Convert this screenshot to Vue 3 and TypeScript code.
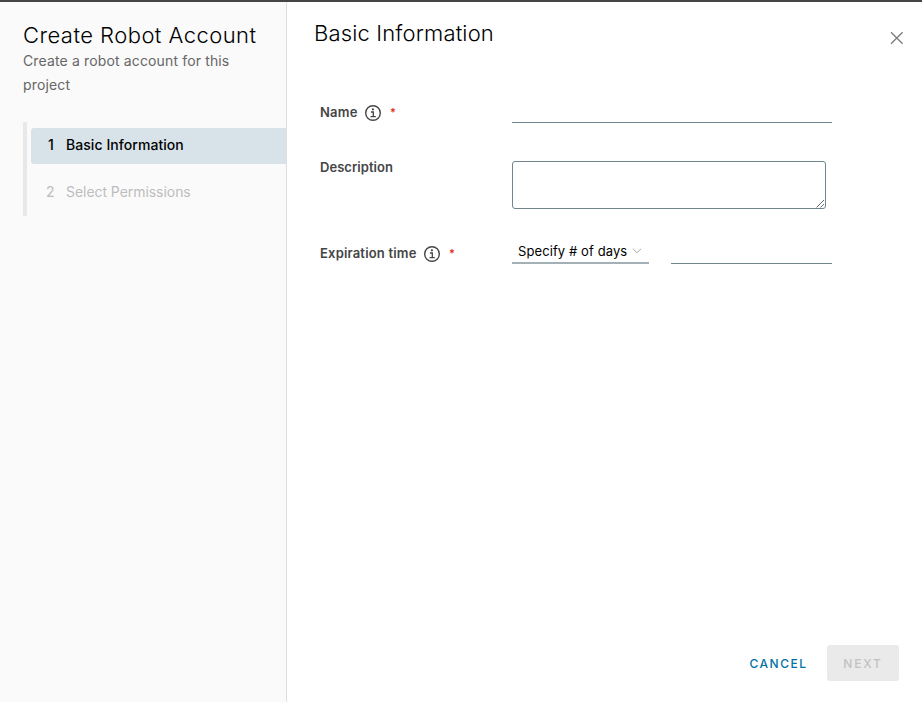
<script setup lang="ts">
import { ref } from 'vue'

interface Step {
  id: number
  title: string
}

const steps: Step[] = [
  { id: 1, title: 'Basic Information' },
  { id: 2, title: 'Select Permissions' },
]

const current = ref(1)
const name = ref('')
const description = ref('')
const days = ref('')
</script>

<template>
  <div class="wizard">
    <aside class="side">
      <h1 class="title">Create Robot Account</h1>
      <p class="subtitle">Create a robot account for this project</p>
      <ol class="steps">
        <li v-for="step in steps" :key="step.id" class="step" :class="{ active: step.id === current }">
          <span class="num">{{ step.id }}</span>
          <span class="step-title">{{ step.title }}</span>
        </li>
      </ol>
    </aside>

    <main class="main">
      <header class="head">
        <h2 class="page-title">Basic Information</h2>
        <button class="close" type="button" aria-label="Close">
          <svg width="14" height="14" viewBox="0 0 14 14">
            <path d="M1 1.2 12.6 12.8M12.6 1.2 1 12.8" fill="none" stroke="#7c7c7c" stroke-width="1.3" />
          </svg>
        </button>
      </header>

      <form class="form" @submit.prevent>
        <div class="row row-name">
          <label class="label l-name" for="name">Name</label>
          <svg class="info" width="16" height="16" viewBox="0 0 16 16">
            <circle cx="8" cy="8" r="7.3" fill="none" stroke="#454545" stroke-width="1.4" />
            <circle cx="7.9" cy="4.3" r="1.1" fill="#454545" />
            <path d="M5.9 7H8.3V11.6M5.5 11.7H10.8" fill="none" stroke="#454545" stroke-width="1.3" />
          </svg>
          <span class="required">*</span>
          <input id="name" v-model="name" class="line-input name-input" />
        </div>

        <div class="row row-desc">
          <label class="label l-desc" for="description">Description</label>
          <div class="area">
            <textarea id="description" v-model="description"></textarea>
            <svg class="grip" width="9" height="9" viewBox="0 0 9 9">
              <path d="M0.5 8.5 8 1M4.5 8.5 8 5" fill="none" stroke="#6a6a6a" stroke-width="1" />
            </svg>
          </div>
        </div>

        <div class="row row-exp">
          <span class="label l-exp">Expiration time</span>
          <svg class="info" width="16" height="16" viewBox="0 0 16 16">
            <circle cx="8" cy="8" r="7.3" fill="none" stroke="#454545" stroke-width="1.4" />
            <circle cx="7.9" cy="4.3" r="1.1" fill="#454545" />
            <path d="M5.9 7H8.3V11.6M5.5 11.7H10.8" fill="none" stroke="#454545" stroke-width="1.3" />
          </svg>
          <span class="required">*</span>
          <div class="select">
            <span>Specify # of days</span>
            <svg width="10" height="6" viewBox="0 0 10 6">
              <path d="M0.9 0.7 5 4.8 9.1 0.7" fill="none" stroke="#a6a6a6" stroke-width="1" />
            </svg>
          </div>
          <input v-model="days" class="line-input days-input" aria-label="Days" />
        </div>
      </form>

      <footer class="foot">
        <button class="btn cancel" type="button">CANCEL</button>
        <button class="btn next" type="button" disabled>NEXT</button>
      </footer>
    </main>
  </div>
</template>

<style>
body {
  background: #fff;
}
</style>

<style scoped>
* {
  box-sizing: border-box;
}
.wizard {
  display: flex;
  height: 702px;
  overflow: hidden;
  border-top: 2px solid #474446;
  background: #fff;
  font-family: Inter, 'Liberation Sans', sans-serif;
  color: #000;
}
.side {
  flex: none;
  width: 287px;
  padding: 19px 0 0 23px;
  background: #fafafa;
  border-right: 1px solid #dedede;
}
h1,
h2,
p,
ol {
  margin: 0;
  padding: 0;
}
.title {
  font-size: 22px;
  line-height: 28px;
  font-weight: 300;
  letter-spacing: 0.45px;
  white-space: nowrap;
}
.subtitle {
  width: 240px;
  font-size: 14px;
  line-height: 24px;
  letter-spacing: 0.14px;
  color: #666;
}
.steps {
  margin-top: 25px;
  height: 94px;
  padding: 6px 0 0 4px;
  border-left: 4px solid #e8e8e8;
  list-style: none;
}
.step {
  display: flex;
  align-items: center;
  height: 36px;
  margin-bottom: 11px;
  padding: 0 0 3px 15px;
  border-radius: 3px 0 0 3px;
  font-size: 14px;
  letter-spacing: -0.05px;
  color: #bdbdbd;
}
.step.active {
  background: #d8e3e9;
  color: #000;
  font-weight: 500;
  letter-spacing: 0.06px;
}
.num {
  width: 20px;
}
.step.active .num {
  padding-left: 2px;
}
.main {
  flex: 1;
  display: flex;
  flex-direction: column;
}
.head {
  display: flex;
  justify-content: space-between;
  padding: 18px 18px 0 27px;
  height: 98px;
}
.page-title {
  font-size: 22px;
  line-height: 27px;
  font-weight: 300;
  letter-spacing: 0.16px;
}
.close {
  width: 14px;
  height: 14px;
  margin-top: 11px;
  padding: 0;
  border: 0;
  background: none;
}
.close svg {
  display: block;
}
.form {
  flex: 1;
  padding-left: 33px;
}
.row {
  display: flex;
  align-items: flex-start;
}
.row-name {
  height: 61px;
}
.row-desc {
  height: 76px;
}
.label {
  margin-top: 2px;
  font-size: 13px;
  line-height: 20px;
  font-weight: 600;
  color: #454545;
  white-space: nowrap;
}
.l-name {
  width: 45px;
  letter-spacing: 0.2px;
}
.l-desc {
  width: 192px;
  margin-top: -4px;
  letter-spacing: 0.05px;
}
.l-exp {
  width: 104px;
  margin-top: 6px;
  letter-spacing: 0.18px;
}
.info {
  flex: none;
  margin-top: 5px;
}
.row-exp .info {
  margin-top: 9px;
}
.required {
  margin-top: 4px;
  padding-left: 9px;
  font-size: 11px;
  line-height: 16px;
  font-weight: 600;
  color: #e0301a;
}
.row-name .required {
  width: 131px;
}
.row-exp .required {
  width: 72px;
  margin-top: 8px;
}
.line-input {
  padding: 0 6px;
  border: 0;
  border-bottom: 1px solid #71858f;
  background: none;
  outline: none;
  font: 13px Inter, sans-serif;
}
.name-input {
  width: 320px;
  height: 23px;
}
.area {
  position: relative;
  width: 314px;
  height: 48px;
}
.area textarea {
  display: block;
  width: 100%;
  height: 100%;
  padding: 6px;
  border: 1px solid #71858f;
  border-radius: 3px;
  background: #fff;
  outline: none;
  resize: none;
  font: 13px Inter, sans-serif;
}
.grip {
  position: absolute;
  right: 1px;
  bottom: 1px;
}
.select {
  display: flex;
  align-items: center;
  width: 137px;
  height: 27px;
  padding: 2px 6px 0;
  border-bottom: 2px solid #a3b0b5;
  font-size: 13px;
  letter-spacing: 0.1px;
  white-space: nowrap;
}
.select svg {
  margin-left: 5px;
}
.days-input {
  width: 161px;
  height: 27px;
  margin-left: 22px;
}
.foot {
  display: flex;
  justify-content: flex-end;
  padding: 0 23px 21px 0;
}
.btn {
  height: 36px;
  padding: 0;
  border: 0;
  border-radius: 3px;
  background: none;
  font: 500 12px Inter, sans-serif;
}
.cancel {
  width: 97px;
  color: #0072a3;
  letter-spacing: 1.5px;
}
.next {
  width: 72px;
  background: #eaeaea;
  color: #c2c2c2;
  letter-spacing: 1.8px;
}
</style>
